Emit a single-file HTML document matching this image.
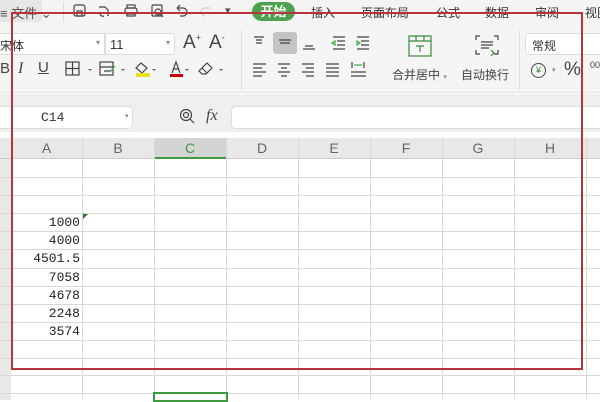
<!DOCTYPE html>
<html><head><meta charset="utf-8"><style>
*{margin:0;padding:0;box-sizing:border-box}
body{width:600px;height:400px;overflow:hidden;background:#fff;position:relative;font-family:"Liberation Sans","Noto Sans CJK SC",sans-serif;color:#333}
.a{position:absolute}
.t{font-size:12px;color:#333;white-space:nowrap}
.ic{position:absolute;stroke:#444;fill:none;stroke-width:1.2}
.hl{position:absolute;left:0;width:600px;height:1px;background:#d8d8d8}
.vl{position:absolute;top:138px;width:1px;height:262px;background:#d8d8d8}
.ch{position:absolute;top:138px;height:21px;font-size:14px;color:#666;text-align:center;line-height:21px}
.num{position:absolute;left:11px;width:69px;text-align:right;font-family:"Liberation Mono","DejaVu Sans Mono",monospace;font-size:13px;color:#222;height:18px;line-height:19px}
</style></head><body>
<!-- top menu bar -->
<div class="a" style="left:0;top:0;width:600px;height:26px;background:#f4f4f4"></div>
<div class="a" style="left:0;top:0;width:42px;height:22px;background:#e6e6e6;border-radius:0 0 4px 0"></div>
<div class="a t" style="left:0;top:3px;font-size:13px;color:#555">≡ 文件 ⌄</div>
<div class="a" style="left:63px;top:2px;width:1px;height:20px;background:#ddd"></div>
<svg class="ic" style="left:72px;top:3px" width="150" height="16" viewBox="0 0 150 16">
<rect x="2" y="2" width="11" height="11" rx="2"/><rect x="5" y="8" width="5" height="5"/>
<path d="M27 4h6l3 3v6M29 9c-2 2 0 5 3 4"/>
<rect x="53" y="5" width="12" height="6" rx="2"/><rect x="55" y="2" width="8" height="3"/><rect x="55" y="10" width="8" height="3"/>
<rect x="80" y="2" width="10" height="11" rx="1"/><circle cx="86" cy="9" r="3"/><path d="M88 11l3 3"/>
<path d="M105 5h6a4 4 0 0 1 0 8h-3M105 5l3-3M105 5l3 3"/>
<path d="M138 5h-5a4 4 0 0 0 0 8" stroke="#ccc"/>
</svg>
<div class="a t" style="left:225px;top:4px;color:#555;font-size:11px">▾</div>
<div class="a" style="left:252px;top:2px;width:43px;height:19px;background:#4ea24e;border-radius:10px;color:#fff;font-size:13px;text-align:center;line-height:19px;font-weight:bold">开始</div>
<div class="a t" style="left:311px;top:4px;font-size:12px">插入</div>
<div class="a t" style="left:361px;top:4px;font-size:12px">页面布局</div>
<div class="a t" style="left:436px;top:4px;font-size:12px">公式</div>
<div class="a t" style="left:485px;top:4px;font-size:12px">数据</div>
<div class="a t" style="left:535px;top:4px;font-size:12px">审阅</div>
<div class="a t" style="left:585px;top:4px;font-size:12px">视图</div>
<!-- ribbon -->
<div class="a" style="left:0;top:26px;width:600px;height:67px;background:#f5f5f5;border-bottom:1px solid #e3e3e3"></div>
<div class="a" style="left:0;top:33px;width:105px;height:22px;background:#fff;border:1px solid #ddd;border-left:none"></div>
<div class="a t" style="left:0;top:37px;font-size:12px">宋体</div>
<div class="a t" style="left:96px;top:38px;font-size:8px;color:#888">▾</div>
<div class="a" style="left:105px;top:33px;width:70px;height:22px;background:#fff;border:1px solid #ddd;border-radius:0 4px 4px 0"></div>
<div class="a t" style="left:110px;top:37px;font-size:13px">11</div>
<div class="a t" style="left:166px;top:38px;font-size:8px;color:#888">▾</div>
<div class="a t" style="left:183px;top:32px;font-size:19px;color:#444">A<sup style="font-size:9px">+</sup></div>
<div class="a t" style="left:209px;top:32px;font-size:19px;color:#444">A<sup style="font-size:9px">-</sup></div>
<div class="a t" style="left:0;top:60px;font-size:15px;color:#444">B</div>
<div class="a t" style="left:18px;top:60px;font-size:16px;font-style:italic;font-family:'Liberation Serif',serif;color:#444">I</div>
<div class="a t" style="left:38px;top:59px;font-size:15px;color:#444;text-decoration:underline">U</div>
<svg class="ic" style="left:64px;top:60px" width="180" height="18" viewBox="0 0 180 18">
<rect x="2" y="2" width="13" height="13"/><path d="M8.5 2v13M2 8.5h13"/>
<path d="M24 9l2 2 2-2" fill="#666" stroke="none"/>
<rect x="36" y="2" width="13" height="13"/><path d="M36 7h13M40 11h6" /><path d="M46 12l5-6" stroke="#4a4"/>
<path d="M57 9l2 2 2-2" fill="#666" stroke="none"/>
<path d="M77 3l6 5-5 5-6-5z"/><rect x="72" y="13" width="14" height="4" fill="#e8e020" stroke="none"/>
<path d="M88 9l2 2 2-2" fill="#666" stroke="none"/>
<path d="M108 13l4-11 4 11M109.5 9h5"/><rect x="106" y="14" width="13" height="3" fill="#c00" stroke="none"/>
<path d="M121 9l2 2 2-2" fill="#666" stroke="none"/>
<path d="M143 3l5 5-6 6h-4l-3-3z M138 8l5 5"/>
<path d="M155 9l2 2 2-2" fill="#666" stroke="none"/>
</svg>
<div class="a" style="left:241px;top:30px;width:1px;height:60px;background:#e0e0e0"></div>
<div class="a" style="left:273px;top:32px;width:24px;height:22px;background:#c4c4c4;border-radius:3px"></div>
<svg class="ic" style="left:250px;top:34px" width="125" height="50" viewBox="0 0 125 50">
<path d="M4 3h10M6 6h6M6 9h6"/><path d="M29 6h12M30 9h10"/><path d="M55 12h8M53 15h12"/>
<path d="M83 3h12M87 7h8M87 11h8M83 15h12" /><path d="M82 9l3-2v4z" stroke="#4a4"/>
<path d="M107 3h12M111 7h8M111 11h8M107 15h12"/><path d="M110 9l-3-2v4z" stroke="#4a4"/>
<path d="M3 30h13M3 34h9M3 38h13M3 42h9"/><path d="M28 30h12M31 34h6M28 38h12M31 42h6"/>
<path d="M52 30h12M56 34h8M52 38h12M56 42h8"/><path d="M76 30h13M76 34h13M76 38h13M76 42h13"/>
<path d="M102 28v6M114 28v6M101 42h15M101 38h15"/><path d="M104 31h8" stroke="#4a4"/>
</svg>
<svg class="ic" style="left:405px;top:34px" width="100" height="26" viewBox="0 0 100 26">
<rect x="4" y="2" width="22" height="20" stroke="#3a8a3a"/><path d="M4 7h22M11 2v5M19 2v5M11 12h8M15 12v6" stroke="#3a8a3a"/>
<path d="M75 2h-4v4M71 16v4h4M89 2h4v4M93 16v4h-4M76 8h12M76 11h12M76 14h8" /><path d="M86 16l3 3-3 3" stroke="#3a8a3a"/>
</svg>
<div class="a t" style="left:392px;top:66px;font-size:12px;color:#444">合并居中 <span style="font-size:7px;color:#888">▾</span></div>
<div class="a t" style="left:461px;top:66px;font-size:12px;color:#444">自动换行</div>
<div class="a" style="left:519px;top:30px;width:1px;height:60px;background:#e0e0e0"></div>
<div class="a" style="left:525px;top:33px;width:80px;height:22px;background:#fff;border:1px solid #ddd;border-radius:4px"></div>
<div class="a t" style="left:532px;top:37px;font-size:12px">常规</div>
<div class="a" style="left:531px;top:63px;width:15px;height:15px;border:1.2px solid #444;border-radius:50%;font-size:9px;text-align:center;line-height:13px;color:#3a8a3a">¥</div>
<div class="a t" style="left:552px;top:66px;font-size:7px;color:#888">▾</div>
<div class="a t" style="left:564px;top:59px;font-size:19px;color:#444">%</div>
<div class="a t" style="left:590px;top:60px;font-size:9px;color:#444">00</div>
<!-- formula bar -->
<div class="a" style="left:0;top:94px;width:600px;height:38px;background:#efefef"></div>
<div class="a" style="left:0;top:106px;width:133px;height:23px;background:#fff;border:1px solid #ddd;border-left:none;border-radius:0 5px 5px 0"></div>
<div class="a" style="left:41px;top:110px;font-family:'Liberation Mono',monospace;font-size:13px;color:#333">C14</div>
<div class="a t" style="left:125px;top:112px;font-size:7px;color:#888">▾</div>
<svg class="ic" style="left:178px;top:108px" width="20" height="18" viewBox="0 0 20 18"><circle cx="8" cy="7" r="5.5"/><circle cx="8" cy="7" r="2.5"/><path d="M12 11l4 4"/></svg>
<div class="a" style="left:206px;top:107px;font-family:'Liberation Serif',serif;font-style:italic;font-size:16px;color:#444">fx</div>
<div class="a" style="left:231px;top:106px;width:369px;height:23px;background:#fff;border:1px solid #ddd;border-right:none;border-radius:5px 0 0 5px"></div>
<!-- column headers -->
<div class="a" style="left:0;top:138px;width:600px;height:21px;background:#e8e8e8;border-bottom:1px solid #ccc"></div>
<div class="a" style="left:154px;top:138px;width:72px;height:21px;background:#d4d4d4;border-bottom:2px solid #3f9a3f"></div>
<div class="a" style="left:0;top:159px;width:11px;height:241px;background:#e8e8e8"></div>
<div class="ch" style="left:11px;width:71px">A</div>
<div class="ch" style="left:82px;width:72px">B</div>
<div class="ch" style="left:154px;width:72px;color:#3f9a3f">C</div>
<div class="ch" style="left:226px;width:72px">D</div>
<div class="ch" style="left:298px;width:72px">E</div>
<div class="ch" style="left:370px;width:72px">F</div>
<div class="ch" style="left:442px;width:72px">G</div>
<div class="ch" style="left:514px;width:72px">H</div>
<!-- grid -->
<div class="vl" style="left:82px"></div><div class="vl" style="left:154px"></div><div class="vl" style="left:226px"></div>
<div class="vl" style="left:298px"></div><div class="vl" style="left:370px"></div><div class="vl" style="left:442px"></div>
<div class="vl" style="left:514px"></div><div class="vl" style="left:586px"></div>
<div class="hl" style="top:177px"></div><div class="hl" style="top:195px"></div><div class="hl" style="top:213px"></div>
<div class="hl" style="top:231px"></div><div class="hl" style="top:249px"></div><div class="hl" style="top:268px"></div>
<div class="hl" style="top:286px"></div><div class="hl" style="top:304px"></div><div class="hl" style="top:322px"></div>
<div class="hl" style="top:340px"></div><div class="hl" style="top:358px"></div><div class="hl" style="top:375px"></div>
<div class="hl" style="top:393px"></div>
<div class="a" style="left:83px;top:214px;width:0;height:0;border-top:5px solid #2a7a2a;border-right:5px solid transparent"></div>
<div class="num" style="top:213px">1000</div>
<div class="num" style="top:231px">4000</div>
<div class="num" style="top:249px">4501.5</div>
<div class="num" style="top:268px">7058</div>
<div class="num" style="top:286px">4678</div>
<div class="num" style="top:304px">2248</div>
<div class="num" style="top:322px">3574</div>
<div class="a" style="left:153px;top:392px;width:75px;height:10px;border:2px solid #3f9a3f"></div>
<!-- red box -->
<div class="a" style="left:11px;top:12px;width:572px;height:358px;border:2px solid #b8343c"></div>
</body></html>
